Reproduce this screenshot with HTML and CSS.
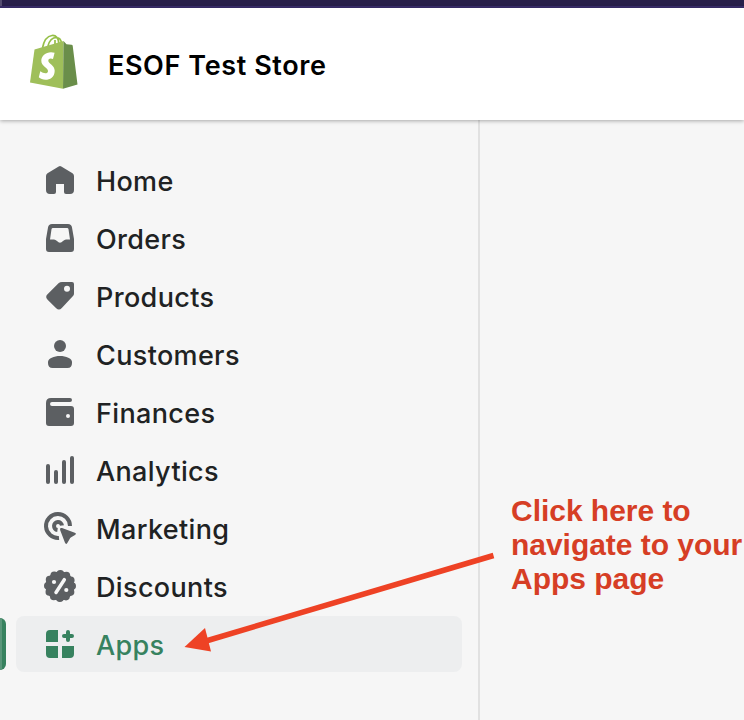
FILE: index.html
```html
<!DOCTYPE html>
<html lang="en">
<head>
<meta charset="utf-8">
<title>ESOF Test Store</title>
<link rel="stylesheet" href="styles.css">
</head>
<body>
<div class="browser-edge"></div>
<header class="topbar">
  <svg class="logo" viewBox="0 0 50 58">
    <path d="M13.500 16C15 8 19 4 23 3.500C27 3 29.500 6 30 12M19 14C20.500 8 24 5.500 27.500 5.500C30.500 5.500 32 8 32.500 11M26 12V8" fill="none" stroke="#95bf47" stroke-width="1.700"/>
    <path d="M5.500 17.500L34.500 9L34 56.800L1 50.500Z" fill="#9fbf5a"/>
    <path d="M34.500 9L37.500 12.200L42.500 12.700Q43.500 12.800 43.700 13.800L48.500 52.500L34 56.800Z" fill="#6a8e4a"/>
    <path d="M25.600 20.800C18.500 18.600 12.300 23.300 12.300 28.700C12.300 34.200 19 35.500 19 38.900C19 42.200 14.500 41.800 11.300 39.300L9.800 45.300C14 49.600 25.500 49 25.700 38.700C25.800 33.300 19.300 31.600 19.300 28.700C19.300 26.200 22 26 24 27Z" fill="#fff"/>
  </svg>
  <h1 class="store-name">ESOF Test Store</h1>
</header>
<div class="frame">
  <nav class="sidebar">
    <a class="item"><svg class="icon" viewBox="0 0 40 40"><path d="M18.700 6.500Q20 5.700 21.300 6.500L32.500 13.300Q34 14.200 34 16V30Q34 34 30 34H26Q24 34 24 32V24H16V32Q16 34 14 34H10Q6 34 6 30V16Q6 14.200 7.500 13.300Z"/></svg><span class="label">Home</span></a>
    <a class="item"><svg class="icon" viewBox="0 0 40 40"><path fill-rule="evenodd" d="M12 6H28Q31.500 6 32 9.500L34 21V31Q34 34 31 34H9Q6 34 6 31V21L8 9.500Q8.500 6 12 6ZM13 10Q11.700 10 11.500 11.300L10 21.500H14Q15.500 21.500 17 23Q18.500 24.800 20 24.800Q21.500 24.800 23 23Q24.500 21.500 26 21.500H30L28.500 11.300Q28.300 10 27 10Z"/></svg><span class="label">Orders</span></a>
    <a class="item"><svg class="icon" viewBox="0 0 40 40"><path fill-rule="evenodd" d="M22 6H32Q34 6 34 8V17.500Q34 19 33 20L21.800 32Q19 35 16.200 32.200L7.600 23.700Q4.800 21 7.500 18.300L18.500 7.300Q20 6 22 6ZM27 9.800A3 3 0 1 0 27 15.800A3 3 0 1 0 27 9.800Z"/></svg><span class="label">Products</span></a>
    <a class="item"><svg class="icon" viewBox="0 0 40 40"><circle cx="20" cy="12" r="6"/><path d="M8 28C8 24.500 14 22 20 22S32 24.500 32 28V29Q32 34 27.500 34H12.500Q8 34 8 29Z"/></svg><span class="label">Customers</span></a>
    <a class="item"><svg class="icon" viewBox="0 0 40 40"><path fill-rule="evenodd" d="M11 6H30A2 2 0 0 1 30 10H12A2 2 0 0 0 12 14H31Q34 14 34 17V31Q34 34 31 34H9Q6 34 6 31V11Q6 6 11 6ZM28 22A2 2 0 1 0 28 26A2 2 0 1 0 28 22Z"/></svg><span class="label">Finances</span></a>
    <a class="item"><svg class="icon" viewBox="0 0 40 40"><rect x="6" y="14" width="4" height="20" rx="2"/><rect x="14" y="20" width="4" height="14" rx="2"/><rect x="22" y="10" width="4" height="24" rx="2"/><rect x="30" y="6" width="4" height="28" rx="2"/></svg><span class="label">Analytics</span></a>
    <a class="item"><svg class="icon" viewBox="0 0 40 40"><path class="ring" d="M30 18A12 12 0 1 0 19 30M22 17.500A4 4 0 1 0 17.500 22"/><path d="M22 20.100L34.800 24.800Q37 25.800 35 27L31.200 29.300Q30 30 29.500 31.200L27.300 35Q26 37 25 34.800L20.100 22Q19.500 19.300 22 20.100Z"/></svg><span class="label">Marketing</span></a>
    <a class="item"><svg class="icon" viewBox="0 0 40 40"><circle cx="20" cy="20" r="14.500"/><circle class="scallop" cx="20" cy="20" r="12.200"/><path class="slash" d="M16 26.500L24.300 13.700"/><circle class="hole" cx="14" cy="16" r="2.100"/><circle class="hole" cx="26.300" cy="24" r="2.100"/></svg><span class="label">Discounts</span></a>
    <a class="item active"><svg class="icon" viewBox="0 0 40 40"><path d="M10 6H18V18H6V10Q6 6 10 6ZM6 22H18V34H10Q6 34 6 30ZM22 22H34V30Q34 34 30 34H22Z"/><path class="plus" d="M28 8V16M24 12H32"/></svg><span class="label">Apps</span></a>
  </nav>
  <main class="content"><p class="note">Click here to<br>navigate to your<br>Apps page</p></main>
</div>
<svg class="arrow" viewBox="0 0 320 110"><path d="M26 91L313.500 5.500" stroke="#ee4225" stroke-width="5.500"/><path d="M4.500 97L25 78L31 101.500Z" fill="#ee4225"/></svg>
</body>
</html>
```
FILE: styles.css
```css
* { box-sizing: border-box; }
body { margin: 0; width: 744px; height: 720px; overflow: hidden; position: relative; display: flex; flex-direction: column; background: #f6f6f6; font-family: Inter, "Liberation Sans", sans-serif; }
.browser-edge { height: 8px; flex: none; background: #281f4a; border-bottom: 2px solid #3a2d6b; box-shadow: inset 2px 0 #544c70; }
.topbar { height: 112px; flex: none; display: flex; align-items: center; padding-left: 29px; background: #fff; box-shadow: 0 1px 4px rgba(0,0,0,.32); z-index: 1; }
.logo { width: 50px; height: 58px; margin-top: -6px; }
.store-name { margin: 3px 0 0 29px; font-size: 27px; line-height: 36px; font-weight: 600; letter-spacing: .6px; color: #000; white-space: nowrap; }
.frame { flex: 1; display: flex; min-height: 0; }
.sidebar { width: 480px; border-right: 2px solid #e1e1e1; padding: 32px 16px 0; display: flex; flex-direction: column; gap: 2px; }
.item { position: relative; height: 56px; flex: none; display: flex; align-items: center; padding-left: 24px; border-radius: 8px; color: #202223; }
.icon { width: 40px; height: 40px; fill: #5c5f62; flex: none; }
.label { margin: 3px 0 0 16px; font-size: 27px; line-height: 40px; font-weight: 450; letter-spacing: .35px; }
.ring { fill: none; stroke: #5c5f62; stroke-width: 4; stroke-linecap: butt; }
.scallop { fill: none; stroke: #5c5f62; stroke-width: 7.600; stroke-linecap: round; stroke-dasharray: 0 6.388; }
.slash { stroke: #f6f6f6; stroke-width: 3.500; stroke-linecap: round; }
.hole { fill: #f6f6f6; }
.active { background: #edeeef; color: #37825f; }
.active .icon { fill: #37825f; }
.plus { fill: none; stroke: #37825f; stroke-width: 4; stroke-linecap: round; }
.active::before { content: ""; position: absolute; left: -16px; top: 2px; width: 6px; height: 52px; border-radius: 0 6px 6px 0; background: #37825f; box-shadow: inset 2px 0 #5a967a; }
.content { flex: 1; padding: 374px 0 0 31px; }
.note { margin: 0; font: bold 30px/34px "Liberation Sans", Arial, sans-serif; letter-spacing: -.03px; color: #d63e25; white-space: nowrap; }
.arrow { position: absolute; left: 180px; top: 550px; width: 320px; height: 110px; z-index: 2; }
```
